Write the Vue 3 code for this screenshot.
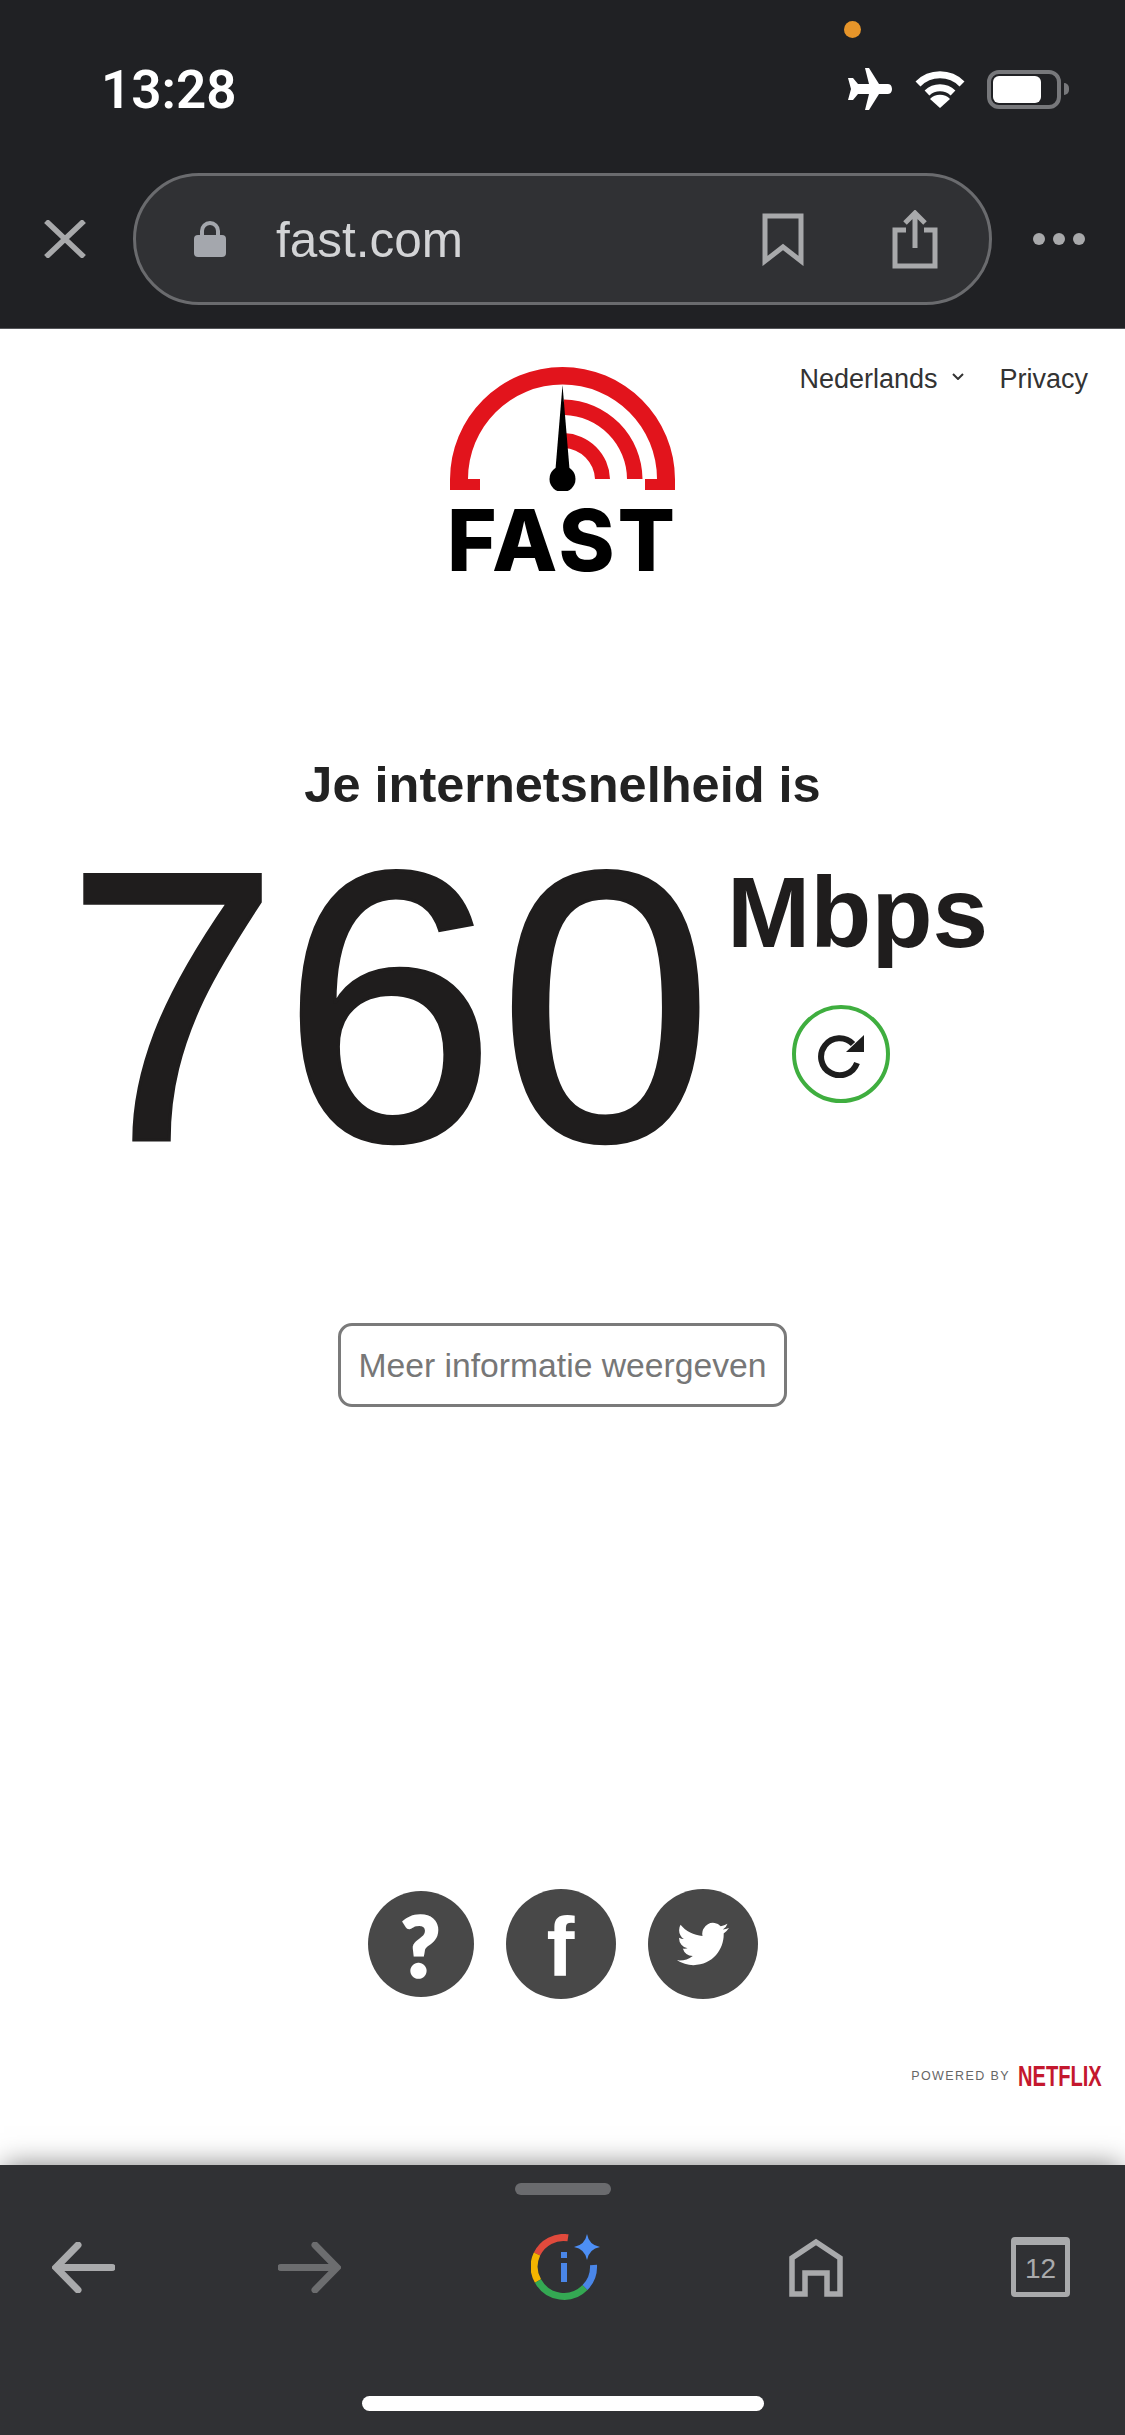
<script setup>
const speed = '760'
</script>

<template>
  <div class="page">
    <header class="top">
      <div class="status">
        <span class="time">13:28</span>
        <i class="dot"></i>
        <div class="status-icons">
          <svg class="plane" viewBox="0 0 47 42"><path fill="#fff" d="M20 0h4l10 16h9c3 0 4 3 4 5s-1 5-4 5h-9L24 42h-4l4-16h-11l-5 6H3l3-11-3-11h5l5 6h11z"/></svg>
          <svg class="wifi" viewBox="0 0 50 37" fill="none" stroke="#fff" stroke-width="7"><path d="M3 13a31 31 0 0 1 44 0"/><path d="M12 22a19 19 0 0 1 26 0"/><path fill="#fff" stroke="none" d="M15 28a14 14 0 0 1 20 0l-10 9z"/></svg>
          <div class="battery"><b></b></div>
          <i class="nub"></i>
        </div>
      </div>
      <div class="urlrow">
        <svg class="close" viewBox="0 0 42 38" fill="none" stroke="#a8a9ab" stroke-width="5.5"><path d="M2 1l38 36M40 1L2 37"/></svg>
        <div class="pill">
          <svg class="lock" viewBox="0 0 32 36"><path fill="none" stroke="#a4a7ad" stroke-width="4" d="M8 16V10a8 8 0 0 1 16 0v6"/><rect y="14" width="32" height="22" rx="4" fill="#a4a7ad"/></svg>
          <span class="url">fast.com</span>
          <svg class="bookmark" viewBox="0 0 42 54" fill="none" stroke="#a8a9ab" stroke-width="5"><path d="M3 4h36v45L21 35 3 49z"/></svg>
          <svg class="share" viewBox="0 0 46 59" fill="none" stroke="#a8a9ab" stroke-width="5"><path d="M14 20H3v36h40V20H32"/><path d="M23 38V3M13 13L23 3l10 10"/></svg>
        </div>
        <div class="more"><i></i><i></i><i></i></div>
      </div>
    </header>

    <main class="content">
      <nav class="nav">
        <span>Nederlands</span>
        <svg class="chev" viewBox="0 0 12 7" fill="none" stroke="#333" stroke-width="2"><path d="M1 1l5 5 5-5"/></svg>
        <span class="privacy">Privacy</span>
      </nav>

      <div class="logo">
        <svg class="gauge" viewBox="0 0 225 124">
          <path fill="#e2141c" d="M0 123V112.500A112.500 112.500 0 0 1 225 112.500V123H195V112H207A94.500 94.500 0 0 0 18 112H30V123Z"/>
          <path fill="#e2141c" d="M114 32.500A80 80 0 0 1 192.500 112H177A64.500 64.500 0 0 0 114 48Z"/>
          <path fill="#e2141c" d="M114 66A47.500 47.500 0 0 1 160 112H145A32.500 32.500 0 0 0 114 81Z"/>
          <path fill="#000" d="M112.500 18L119.500 102H105.500Z"/>
          <circle cx="112.500" cy="112" r="13" fill="#000"/>
        </svg>
        <div class="wordmark">FAST</div>
      </div>

      <h1 class="title">Je internetsnelheid is</h1>

      <div class="speed">
        <span class="value">{{ speed }}</span>
        <div class="side">
          <span class="units">Mbps</span>
          <div class="reload">
            <svg viewBox="0 0 48 48" width="48" height="48" fill="none"><path stroke="#1d1d1d" stroke-width="6" d="M40 33A18.500 18.500 0 1 1 36 14"/><path fill="#1d1d1d" d="M47 5V22H29Z"/></svg>
          </div>
        </div>
      </div>

      <button class="more-info">Meer informatie weergeven</button>

      <div class="social">
        <span class="circle q">?</span>
        <span class="circle f">f</span>
        <span class="circle">
          <svg viewBox="0 0 24 20" width="52" height="44"><path fill="#fff" d="M23.953 2.57a10 10 0 0 1-2.825.775 4.958 4.958 0 0 0 2.163-2.723c-.951.555-2.005.959-3.127 1.184a4.92 4.92 0 0 0-8.384 4.482C7.69 6.095 4.067 4.13 1.64 1.162a4.822 4.822 0 0 0-.666 2.475c0 1.71.87 3.213 2.188 4.096a4.904 4.904 0 0 1-2.228-.616v.06a4.923 4.923 0 0 0 3.946 4.827 4.996 4.996 0 0 1-2.212.085 4.936 4.936 0 0 0 4.604 3.417 9.867 9.867 0 0 1-6.102 2.105c-.39 0-.779-.023-1.17-.067a13.995 13.995 0 0 0 7.557 2.209c9.053 0 13.998-7.496 13.998-13.985 0-.21 0-.42-.015-.63A9.935 9.935 0 0 0 24 2.59z"/></svg>
        </span>
      </div>

      <div class="powered">
        <span class="by">POWERED BY</span>
        <span class="netflix">NETFLIX</span>
      </div>
    </main>

    <footer class="bottom">
      <i class="handle"></i>
      <div class="tools">
        <svg class="arrow" viewBox="0 0 63 51" fill="none" stroke="#a9aaac" stroke-width="7" stroke-linecap="round"><path d="M60 25.500H5M26 3L4 25.500 26 48"/></svg>
        <svg class="arrow" viewBox="0 0 63 51" fill="none" stroke="#6c6d6f" stroke-width="7" stroke-linecap="round"><path d="M3 25.500h55M37 3l22 22.500L37 48"/></svg>
        <svg class="lens" viewBox="0 0 70 66" fill="none" stroke-width="7">
          <path stroke="#e04a3c" d="M37 3.800A29.500 29.500 0 0 0 6 20"/>
          <path stroke="#f4b400" d="M6 20A29.500 29.500 0 0 0 7 47"/>
          <path stroke="#34a853" d="M7 47A29.500 29.500 0 0 0 54 53.500"/>
          <path stroke="#4a86e8" d="M54 53.500A29.500 29.500 0 0 0 62.500 31"/>
          <path stroke="#4a86e8" stroke-width="6" d="M33 29v19M33 18v6"/>
          <path fill="#4d8ff5" stroke="none" d="M56 0q2 11 13 13-11 2-13 13-2-11-13-13 11-2 13-13z"/>
        </svg>
        <svg class="home" viewBox="0 0 54 59" fill="none" stroke="#a9aaac" stroke-width="5.500"><path d="M3 56V20L27 4l24 16v36H38V35H16v21z"/></svg>
        <div class="tabs">12</div>
      </div>
      <i class="indicator"></i>
    </footer>
  </div>
</template>

<style scoped>
.page {
  width: 1125px;
  height: 2435px;
  display: flex;
  flex-direction: column;
  overflow: hidden;
  background: #fff;
  font-family: "Liberation Sans", Arial, sans-serif;
}
i { display: block; }

.top { height: 329px; background: #202124; flex: none; display: flex; flex-direction: column; border-bottom: 1px solid #55565a; box-sizing: border-box; }
.status { height: 173px; position: relative; display: flex; align-items: flex-start; flex: none; }
.time { margin: 60px 0 0 101px; font-size: 53px; line-height: 60px; font-weight: 600; color: #fff; font-family: Roboto, sans-serif; }
.dot { position: absolute; left: 844px; top: 21px; width: 17px; height: 17px; border-radius: 50%; background: #e6952a; }
.status-icons { margin-left: auto; margin-top: 68px; margin-right: 56px; display: flex; align-items: center; }
.plane { width: 47px; height: 42px; margin-right: 23px; }
.wifi { width: 50px; height: 37px; margin-right: 22px; }
.battery { width: 74px; height: 39px; box-sizing: border-box; border: 4px solid #77787b; border-radius: 12px; padding: 2px; }
.battery b { display: block; width: 48px; height: 27px; background: #fff; border-radius: 6px; }
.nub { width: 5px; height: 12px; margin-left: 3px; background: #77787b; border-radius: 0 6px 6px 0; }
.urlrow { display: flex; align-items: center; }
.close { width: 42px; height: 38px; margin-left: 44px; margin-right: 47px; flex: none; }
.pill { width: 859px; height: 132px; box-sizing: border-box; border: 3px solid #6a6b6e; border-radius: 66px; background: #303134; display: flex; align-items: center; flex: none; }
.lock { width: 32px; height: 36px; margin-left: 58px; }
.url { margin-left: 50px; font-size: 49.500px; color: #d3d4d6; }
.bookmark { width: 42px; height: 54px; margin-left: auto; }
.share { width: 46px; height: 59px; margin-left: 88px; margin-right: 51px; }
.more { display: flex; gap: 8px; margin-left: 41px; }
.more i { width: 12px; height: 12px; border-radius: 50%; background: #a8a9ab; }

.content { flex: 1; display: flex; flex-direction: column; align-items: center; position: relative; color: #222; }
.nav { position: absolute; right: 37px; top: 35px; display: flex; align-items: center; font-size: 27px; color: #333; }
.chev { width: 12px; height: 7px; margin: -6px 0 0 15px; }
.privacy { margin-left: 35px; }
.logo { margin-top: 38px; width: 225px; flex: none; display: flex; flex-direction: column; align-items: center; }
.gauge { width: 225px; height: 124px; display: block; }
.wordmark { margin-top: 12px; font-family: Inter, sans-serif; font-weight: 800; font-size: 85px; line-height: 76px; letter-spacing: 3px; color: #000; white-space: nowrap; }
.title { margin: 176px 0 0; font-size: 50.500px; line-height: 60px; font-weight: 700; color: #222; }
.speed { margin-top: 18px; width: 1125px; display: flex; align-items: flex-start; flex: none; }
.value { margin-left: 65px; font-size: 386px; line-height: 348px; letter-spacing: 2px; color: #1f1d1d; -webkit-text-stroke: 3px #1f1d1d; }
.side { margin-left: 12px; display: flex; flex-direction: column; align-items: flex-start; flex: none; }
.units { font-size: 100px; font-weight: 700; line-height: 100px; margin-top: 29px; color: #1f1d1d; }
.reload { width: 98px; height: 98px; box-sizing: border-box; border: 4px solid #3fae3f; border-radius: 50%; display: flex; align-items: center; justify-content: center; margin: 43px 0 0 65px; }
.more-info { margin-top: 142px; width: 449px; height: 84px; box-sizing: border-box; background: #fff; border: 3px solid #7a7a7a; border-radius: 14px; color: #777; font-family: inherit; font-size: 33.700px; padding: 0; flex: none; }
.social { margin-top: 482px; display: flex; align-items: center; gap: 32px; flex: none; }
.circle { width: 110px; height: 110px; border-radius: 50%; background: #484848; color: #fff; display: flex; align-items: center; justify-content: center; font-weight: 700; }
.q { font-size: 84px; font-family: Lato, sans-serif; font-weight: 900; width: 106px; height: 106px; -webkit-text-stroke: 2.500px #fff; }
.f { font-size: 84px; padding-top: 6px; box-sizing: border-box; }
.powered { align-self: flex-end; margin: 62px 23px 0 0; display: flex; align-items: center; }
.by { font-size: 12.500px; letter-spacing: 1.400px; color: #666; margin-right: 8px; }
.netflix { font-size: 30px; font-weight: 700; color: #c4182e; display: inline-block; width: 84px; transform: scaleX(.67); transform-origin: left center; white-space: nowrap; line-height: 30px; }

.bottom { height: 270px; flex: none; background: #303134; position: relative; display: flex; flex-direction: column; box-shadow: 0 -4px 26px -4px rgba(0,0,0,.5); }
.handle { width: 96px; height: 12px; border-radius: 6px; background: #6a6b6e; margin: 18px auto 0; flex: none; }
.tools { margin-top: 42px; height: 60px; display: flex; align-items: center; flex: none; }
.arrow { width: 63px; height: 51px; flex: none; }
.arrow:first-child { margin-left: 52px; }
.arrow:nth-child(2) { margin-left: 163px; }
.lens { width: 70px; height: 66px; margin-left: 190px; flex: none; }
.home { width: 54px; height: 59px; margin-left: 188px; flex: none; }
.tabs { width: 59px; height: 60px; box-sizing: border-box; border: 5px solid #a9aaac; border-top-width: 8px; border-radius: 4px; margin-left: 168px; color: #a9aaac; font-size: 28px; display: flex; align-items: center; justify-content: center; flex: none; }
.indicator { width: 402px; height: 15px; border-radius: 8px; background: #fff; margin: 99px auto 0; flex: none; }
</style>
